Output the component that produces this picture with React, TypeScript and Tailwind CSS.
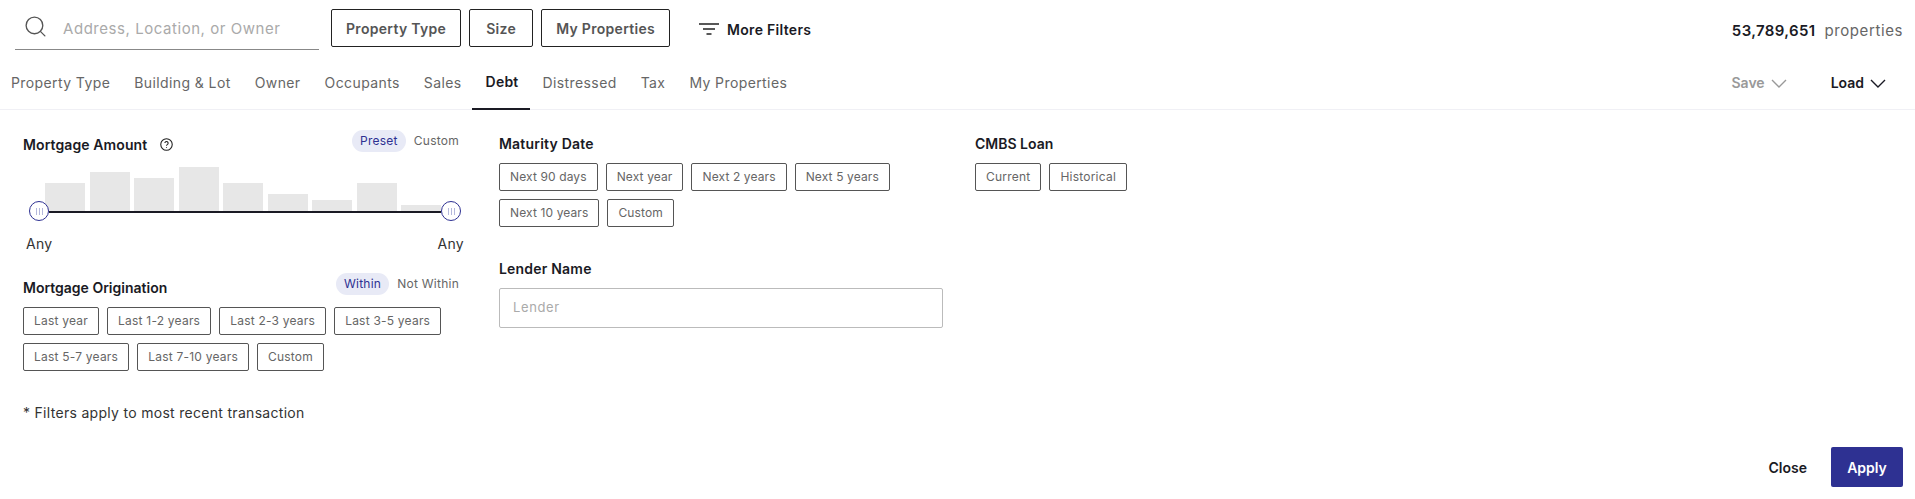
import { Search } from "lucide-react";

const tabs = ["Property Type", "Building & Lot", "Owner", "Occupants", "Sales", "Debt", "Distressed", "Tax", "My Properties"];
const bars = [28, 39, 33, 44, 28, 17, 11, 28, 6];

function Chip({ label, tight }: { label: string; tight?: boolean }) {
  return (
    <button className={`h-[28px] px-[10px] border border-[#555] rounded-[2px] bg-white text-[12px] ${tight ? "tracking-[0.12px]" : "tracking-[0.22px]"} text-[#666] whitespace-nowrap`}>
      {label}
    </button>
  );
}

function TopButton({ label, wide }: { label: string; wide?: boolean }) {
  return (
    <button className={`h-[38px] ${wide ? "w-[64px]" : "px-[14px]"} border border-[#222] rounded-[2px] bg-white text-[14px] font-semibold tracking-[0.3px] text-[#555] whitespace-nowrap`}>
      {label}
    </button>
  );
}

function Toggle({ on, off }: { on: string; off: string }) {
  return (
    <div className="flex items-center text-[12px] tracking-[0.25px]">
      <span className="h-[22px] px-[8px] flex items-center rounded-full bg-[#e8eaf6] text-[#2e3192]">{on}</span>
      <span className="ml-[8px] text-[#666]">{off}</span>
    </div>
  );
}

function Thumb({ side }: { side: string }) {
  return (
    <div className={`absolute top-[-10px] ${side} w-[20px] h-[20px] rounded-full border border-[#2e3192] bg-white flex items-center justify-center gap-[2px]`}>
      <span className="w-[1px] h-[7px] bg-[#b4b8dc]" />
      <span className="w-[1px] h-[7px] bg-[#b4b8dc]" />
      <span className="w-[1px] h-[7px] bg-[#b4b8dc]" />
    </div>
  );
}

function Chevron({ color }: { color: string }) {
  return (
    <svg className="ml-[6px] mt-[2px]" width="16" height="9" viewBox="0 0 16 9" fill="none" stroke={color} strokeWidth="1.4">
      <path d="M1 1l7 7 7-7" />
    </svg>
  );
}

export default function App() {
  return (
    <div className="relative w-[1915px] h-[499px] bg-white overflow-hidden font-['Inter',sans-serif] text-[#1a1a24]">
      {/* Search row */}
      <div className="h-[58px] flex pl-[15px] pr-[12px] pt-[9px]">
        <div className="w-[304px] h-[41px] border-b border-[#888] flex items-start pl-[9px] pt-[6px]">
          <Search size={25} strokeWidth={1.3} className="text-[#555] mt-[-1px] ml-[-1px]" />
          <span className="ml-[15px] mt-[3px] text-[15px] tracking-[0.55px] text-[#aaa]">Address, Location, or Owner</span>
        </div>
        <div className="ml-[12px] flex gap-[8px]">
          <TopButton label="Property Type" />
          <TopButton label="Size" wide />
          <TopButton label="My Properties" />
        </div>
        <div className="ml-[29px] h-[38px] flex items-center mt-[1px]">
          <svg width="20" height="12" viewBox="0 0 20 12" stroke="#222" strokeWidth="1.5">
            <path d="M0 1h20M4 6h12M7.5 11h5" />
          </svg>
          <span className="ml-[8px] text-[14px] font-semibold tracking-[0.3px]">More Filters</span>
        </div>
        <div className="ml-auto h-[38px] flex items-center mt-[3px]">
          <span className="text-[15px] font-semibold tracking-[0.35px]">53,789,651</span>
          <span className="ml-[9px] text-[15px] tracking-[0.6px] text-[#666]">properties</span>
        </div>
      </div>

      {/* Tabs row */}
      <div className="h-[52px] flex border-b border-[#f0f0f5] pl-[11px] pr-[12px]">
        <div className="flex gap-[24px]">
          {tabs.map(t => (
            <div key={t} className={t === "Debt"
              ? "relative h-[51px] pt-[13px] text-[14px] font-semibold tracking-[0.2px] text-[#1a1a24] whitespace-nowrap after:absolute after:left-[-14px] after:right-[-12px] after:bottom-[-1px] after:h-[2px] after:bg-[#1a1a24]"
              : "h-[51px] pt-[14px] text-[14px] tracking-[0.4px] text-[#666] whitespace-nowrap"}>
              {t}
            </div>
          ))}
        </div>
        <div className="ml-auto flex pt-[13px] text-[14px] font-semibold">
          <span className="flex text-[#999] h-[22px] items-center">Save<Chevron color="#999" /></span>
          <span className="flex ml-[44px] mr-[17px] h-[22px] items-center">Load<Chevron color="#1a1a24" /></span>
        </div>
      </div>

      {/* Filters */}
      <div className="flex pl-[23px] pt-[20px]">
        <div className="w-[436px] flex flex-col">
          <div className="flex justify-between h-[22px]">
            <div className="flex items-center pt-[6px] text-[14px] font-semibold tracking-[0.1px]">
              Mortgage Amount
              <svg className="ml-[13px]" width="13" height="13" viewBox="0 0 12 12" fill="none" stroke="#222" strokeWidth="1">
                <circle cx="6" cy="6" r="5.3" />
                <path d="M4.5 4.7a1.5 1.5 0 1 1 2.2 1.4c-.5.3-.7.6-.7 1.1M6 8.2v.9" />
              </svg>
            </div>
            <Toggle on="Preset" off="Custom" />
          </div>
          {/* Histogram + slider */}
          <div className="relative mt-[15px] ml-[22px] w-[402px] h-[44px] flex items-end gap-[4.5px]">
            {bars.map((h, i) => (
              <div key={i} className="w-[40px] bg-[#e7e7e7]" style={{ height: h }} />
            ))}
          </div>
          <div className="relative ml-[26px] w-[392px] h-[2px] bg-[#1a1a24]">
            <Thumb side="left-[-20px]" />
            <Thumb side="right-[-20px]" />
          </div>
          <div className="flex justify-between mt-[21px] ml-[3px] mr-[-5px] text-[14px] leading-[20px] tracking-[0.3px] text-[#333]">
            <span>Any</span>
            <span>Any</span>
          </div>
          <div className="flex justify-between mt-[19px] h-[22px]">
            <div className="flex items-center pt-[6px] text-[14px] font-semibold">Mortgage Origination</div>
            <Toggle on="Within" off="Not Within" />
          </div>
          <div className="mt-[12px] flex flex-wrap gap-[8px]">
            {["Last year", "Last 1-2 years", "Last 2-3 years", "Last 3-5 years", "Last 5-7 years", "Last 7-10 years", "Custom"].map(c => (
              <Chip key={c} label={c} />
            ))}
          </div>
          <p className="mt-[32px] text-[14px] leading-[20px] tracking-[0.3px] text-[#333]">* Filters apply to most recent transaction</p>
        </div>

        <div className="ml-[40px] w-[444px] flex flex-col">
          <div className="h-[22px] pt-[4px] text-[14px] leading-[20px] font-semibold tracking-[0.2px]">Maturity Date</div>
          <div className="mt-[11px] w-[400px] flex flex-wrap gap-[8px]">
            {["Next 90 days", "Next year", "Next 2 years", "Next 5 years", "Next 10 years", "Custom"].map(c => (
              <Chip key={c} label={c} tight />
            ))}
          </div>
          <div className="mt-[32px] text-[14px] leading-[20px] font-semibold tracking-[0.2px]">Lender Name</div>
          <div className="mt-[9px] h-[40px] border border-[#bbb] rounded-[2px] flex items-center pl-[13px] text-[13px] tracking-[0.6px] text-[#aaa]">Lender</div>
        </div>

        <div className="ml-[32px] flex flex-col">
          <div className="h-[22px] pt-[4px] text-[14px] leading-[20px] font-semibold">CMBS Loan</div>
          <div className="mt-[11px] flex gap-[8px]">
            <Chip label="Current" />
            <Chip label="Historical" />
          </div>
        </div>
      </div>

      {/* Footer actions */}
      <div className="absolute right-[12px] bottom-[12px] flex items-center">
        <span className="text-[14px] font-semibold">Close</span>
        <button className="ml-[24px] w-[72px] h-[40px] rounded-[2px] bg-[#2e3192] text-white text-[14px] font-semibold">Apply</button>
      </div>
    </div>
  );
}
